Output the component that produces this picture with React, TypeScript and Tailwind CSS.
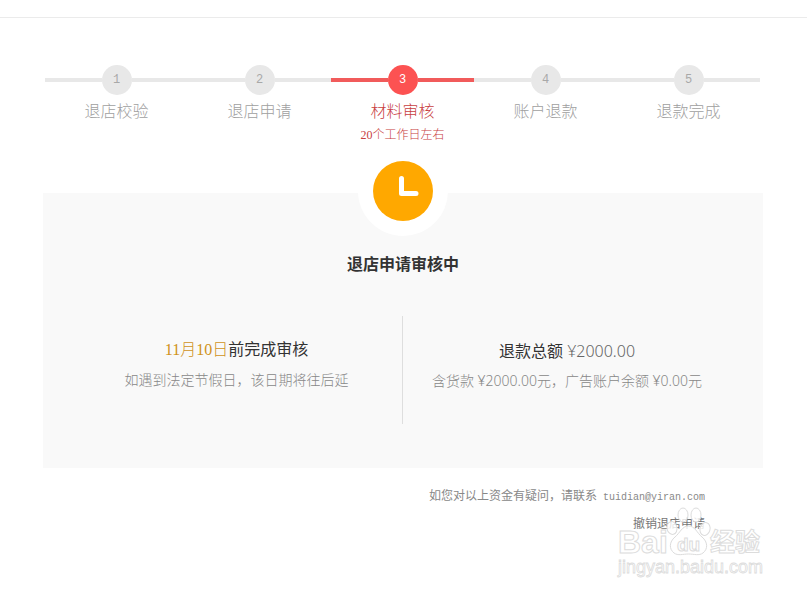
/**
 * Store closing progress: step bar, review status panel and contact footer.
 */

const SERIF_MIX = "font-['Liberation_Serif','Noto_Sans_CJK_SC',sans-serif]";

const steps = [
  { title: '退店校验' },
  { title: '退店申请' },
  { title: '材料审核', note: '20个工作日左右', active: true },
  { title: '账户退款' },
  { title: '退款完成' },
];

function Stepper() {
  return (
    <ol className="ml-0.5 mr-[3px] grid grid-cols-5">
      {steps.map((step, i) => {
        const bar = step.active ? 'bg-[#f15b5b]' : 'bg-[#e8e8e8]';
        return (
          <li
            key={step.title}
            className={`text-center ${step.active ? 'text-[#c8403f]' : 'text-[#a0a0a0]'}`}
          >
            <div className="flex items-center">
              <span className={`h-1 flex-1 ${bar}`} />
              <span
                className={`flex size-[30px] items-center justify-center rounded-full font-['Liberation_Mono',monospace] text-xs ${
                  step.active ? 'bg-[#fc5252] text-white' : 'bg-[#e8e8e8] text-[#a8a8a8]'
                }`}
              >
                {i + 1}
              </span>
              <span className={`h-1 flex-1 ${bar}`} />
            </div>
            <p className="mt-1 text-base font-light leading-6">{step.title}</p>
            {step.note && (
              <p className={`-mb-0.5 text-xs font-light leading-6 ${SERIF_MIX}`}>{step.note}</p>
            )}
          </li>
        );
      })}
    </ol>
  );
}

function ClockBadge() {
  return (
    <div className="mx-auto -mt-[47px] flex size-[90px] items-center justify-center rounded-full bg-white">
      <svg width="60" height="60" viewBox="0 0 60 60" aria-hidden="true">
        <circle cx="30" cy="30" r="30" fill="#ffa800" />
        <path
          d="M28.5 17.5V32.5H43"
          fill="none"
          stroke="#fff"
          strokeWidth="5"
          strokeLinecap="round"
          strokeLinejoin="round"
        />
      </svg>
    </div>
  );
}

function Watermark() {
  return (
    <svg
      className="pointer-events-none absolute right-0 top-[35px]"
      width="148"
      height="78"
      viewBox="0 0 148 78"
      fill="#fff"
      fillOpacity="0.8"
      stroke="#dcdcdc"
      strokeWidth="1"
      fontFamily="'Liberation Sans', 'Noto Sans CJK SC', sans-serif"
    >
      <text x="3" y="50" fontSize="32" fontWeight="700">Bai</text>
      <ellipse cx="57" cy="25" rx="5" ry="6.5" transform="rotate(-12 57 25)" />
      <ellipse cx="68" cy="12" rx="5" ry="7" />
      <ellipse cx="81" cy="12" rx="5" ry="7" />
      <ellipse cx="90" cy="26" rx="5" ry="6.5" transform="rotate(15 90 26)" />
      <path d="M73.5 23C67 23 65 30 60 34C54 39 54 46 59 50C63 53 68 51 73.5 51C79 51 84 53 88 50C93 46 93 39 87 34C82 30 80 23 73.5 23Z" />
      <text x="62" y="48" fontSize="19" fontWeight="700">du</text>
      <text x="95" y="48" fontSize="25" fontWeight="700">经验</text>
      <text x="3" y="70" fontSize="18" strokeWidth="0.8">jingyan.baidu.com</text>
    </svg>
  );
}

export default function App() {
  return (
    <div className="min-h-screen bg-white font-['Noto_Sans','Noto_Sans_CJK_SC',sans-serif]">
      <header className="h-[18px] border-b border-[#ebebeb]" />

      <main className="pl-[43px] pr-11 pt-[47px]">
        <Stepper />

        {/* Review status */}
        <section className="mt-12 flow-root bg-[#f9f9f9] pb-11">
          <ClockBadge />
          <h1 className="mt-4 text-center text-base font-bold leading-6 text-[#333]">
            退店申请审核中
          </h1>
          <div className="mt-10 grid grid-cols-2 text-center">
            <div className="border-r border-[#dedede] pl-7 pt-[22px]">
              <p className={`text-base leading-6 text-[#333] ${SERIF_MIX}`}>
                <span className="font-light text-[#d0921a]">11月10日</span>前完成审核
              </p>
              <p className="mt-1.5 text-sm font-light leading-6 text-[#888]">
                如遇到法定节假日，该日期将往后延
              </p>
            </div>
            <div className="pb-[31px] pr-8 pt-[23px]">
              <p className="text-base leading-6 text-[#333]">
                退款总额 <span className="font-light text-[#666]">¥2000.00</span>
              </p>
              <p className="mt-1.5 text-sm font-light leading-6 text-[#888]">
                含货款 ¥2000.00元，广告账户余额 ¥0.00元
              </p>
            </div>
          </div>
        </section>

        <footer className="relative pr-[58px] pt-4 text-right text-xs leading-6 text-[#888]">
          <p>
            如您对以上资金有疑问，请联系
            <a
              href="mailto:tuidian@yiran.com"
              className="ml-1.5 font-['Liberation_Mono',monospace] text-[10px]"
            >
              tuidian@yiran.com
            </a>
          </p>
          <button type="button" className="mt-0.5 leading-6 text-[#777]">
            撤销退店申请
          </button>
          <Watermark />
        </footer>
      </main>
    </div>
  );
}
